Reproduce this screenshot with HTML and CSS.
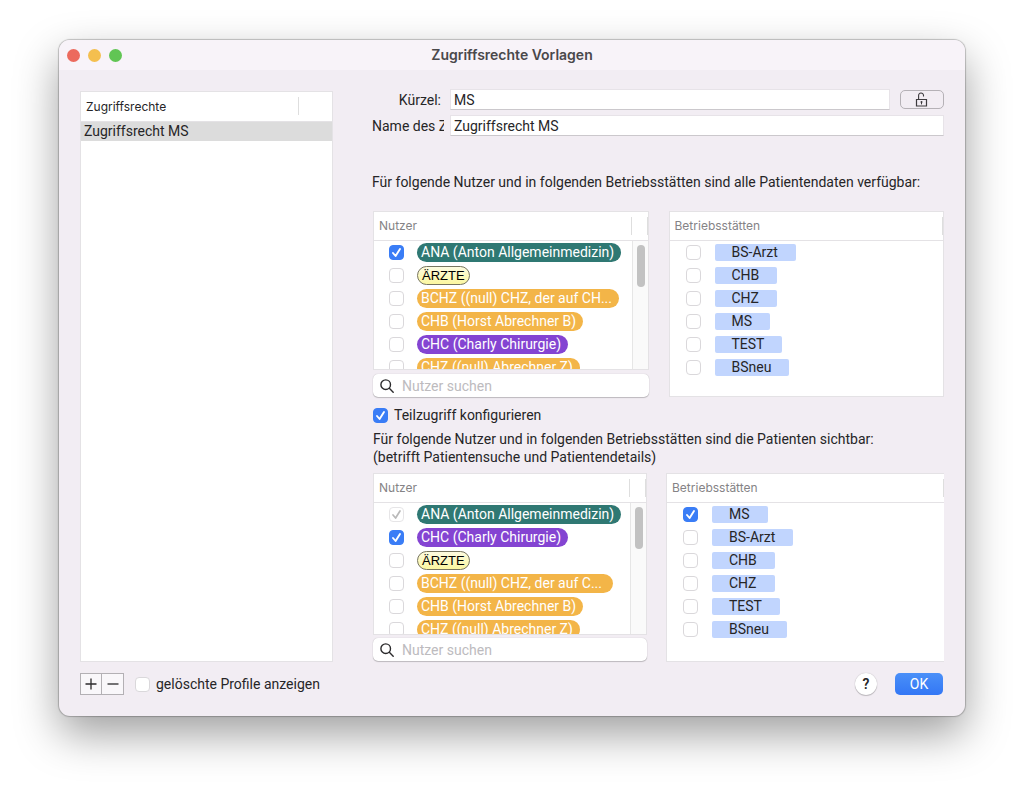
FILE: index.html
```html
<!DOCTYPE html>
<html lang="de">
<head>
<meta charset="utf-8">
<title>Zugriffsrechte Vorlagen</title>
<link rel="stylesheet" href="styles.css">
</head>
<body>
<main class="window">
  <header class="titlebar">
    <div class="lights">
      <button class="light close" aria-label="Schließen"></button>
      <button class="light minimize" aria-label="Minimieren"></button>
      <button class="light maximize" aria-label="Maximieren"></button>
    </div>
    <h1 class="title">Zugriffsrechte Vorlagen</h1>
  </header>

  <div class="content">
    <section class="panel profiles">
      <table class="profile-table">
        <thead><tr><th>Zugriffsrechte</th><th class="end" aria-label="Spalte"></th></tr></thead>
        <tbody><tr><td colspan="2">Zugriffsrecht MS</td></tr></tbody>
      </table>
    </section>

    <section class="details">
      <div class="form">
        <label class="form-label short" for="kuerzel">Kürzel:</label>
        <div class="form-line">
          <input class="field" id="kuerzel" type="text" value="MS">
          <button class="lock" aria-label="Entsperren">
            <svg width="14" height="16" viewBox="0 0 14 16" fill="none" stroke="#3c3a3d">
              <path d="M1.5 7.5h10v6.5h-10z" stroke-width="1.2"/>
              <path d="M3.6 7.2V3.6a2.4 2.4 0 0 1 4.9-.3v1.1" stroke-width="1.1"/>
              <circle cx="6.5" cy="10" r="1" fill="#3c3a3d" stroke="none"/>
              <path d="M6.5 10v2.4"/>
            </svg>
          </button>
        </div>
        <label class="form-label" for="name">Name des Zugriffsrechts:</label>
        <input class="field" id="name" type="text" value="Zugriffsrecht MS">
      </div>

      <p class="intro">Für folgende Nutzer und in folgenden Betriebsstätten sind alle Patientendaten verfügbar:</p>

      <div class="pair">
        <div class="users">
          <div class="panel scroller">
            <table class="list">
              <colgroup><col class="col-tick"><col><col class="col-end"></colgroup>
              <thead><tr><th colspan="2">Nutzer</th><th class="end both" aria-label="Spalte"></th></tr></thead>
              <tbody>
                <tr><td class="tick"><input type="checkbox" id="a1" checked></td><td colspan="2"><label class="pill teal" for="a1">ANA (Anton Allgemeinmedizin)</label></td></tr>
                <tr><td class="tick"><input type="checkbox" id="a2"></td><td colspan="2"><label class="pill yellow" for="a2">ÄRZTE</label></td></tr>
                <tr><td class="tick"><input type="checkbox" id="a3"></td><td colspan="2"><label class="pill orange" for="a3">BCHZ ((null) CHZ, der auf CH...</label></td></tr>
                <tr><td class="tick"><input type="checkbox" id="a4"></td><td colspan="2"><label class="pill orange" for="a4">CHB (Horst Abrechner B)</label></td></tr>
                <tr><td class="tick"><input type="checkbox" id="a5"></td><td colspan="2"><label class="pill purple" for="a5">CHC (Charly Chirurgie)</label></td></tr>
                <tr><td class="tick"><input type="checkbox" id="a6"></td><td colspan="2"><label class="pill orange" for="a6">CHZ ((null) Abrechner Z)</label></td></tr>
              </tbody>
            </table>
            <div class="track"><div class="thumb"></div></div>
          </div>
          <div class="search">
            <svg width="14" height="14" viewBox="0 0 14 14" fill="none" stroke="#2b2a2c" stroke-width="1.4" stroke-linecap="round"><circle cx="5.7" cy="5.7" r="4.8"/><path d="M9.3 9.3l3.9 3.9"/></svg>
            <input type="text" placeholder="Nutzer suchen" aria-label="Nutzer suchen">
          </div>
        </div>
        <div class="panel sites">
          <table class="list">
            <colgroup><col class="col-tick"><col><col class="col-end"></colgroup>
            <thead><tr><th colspan="2">Betriebsstätten</th><th class="end last" aria-label="Spalte"></th></tr></thead>
            <tbody>
              <tr><td class="tick"><input type="checkbox" id="b1"></td><td colspan="2"><label class="tag" for="b1">BS-Arzt</label></td></tr>
              <tr><td class="tick"><input type="checkbox" id="b2"></td><td colspan="2"><label class="tag" for="b2">CHB</label></td></tr>
              <tr><td class="tick"><input type="checkbox" id="b3"></td><td colspan="2"><label class="tag" for="b3">CHZ</label></td></tr>
              <tr><td class="tick"><input type="checkbox" id="b4"></td><td colspan="2"><label class="tag" for="b4">MS</label></td></tr>
              <tr><td class="tick"><input type="checkbox" id="b5"></td><td colspan="2"><label class="tag" for="b5">TEST</label></td></tr>
              <tr><td class="tick"><input type="checkbox" id="b6"></td><td colspan="2"><label class="tag" for="b6">BSneu</label></td></tr>
            </tbody>
          </table>
        </div>
      </div>

      <div class="option">
        <input type="checkbox" id="partial" checked>
        <label for="partial">Teilzugriff konfigurieren</label>
      </div>
      <p class="note">Für folgende Nutzer und in folgenden Betriebsstätten sind die Patienten sichtbar:<br>(betrifft Patientensuche und Patientendetails)</p>

      <div class="pair second">
        <div class="users">
          <div class="panel scroller">
            <table class="list">
              <colgroup><col class="col-tick"><col><col class="col-end"></colgroup>
              <thead><tr><th colspan="2">Nutzer</th><th class="end both" aria-label="Spalte"></th></tr></thead>
              <tbody>
                <tr><td class="tick"><input type="checkbox" id="c1" checked disabled></td><td colspan="2"><label class="pill teal" for="c1">ANA (Anton Allgemeinmedizin)</label></td></tr>
                <tr><td class="tick"><input type="checkbox" id="c2" checked></td><td colspan="2"><label class="pill purple" for="c2">CHC (Charly Chirurgie)</label></td></tr>
                <tr><td class="tick"><input type="checkbox" id="c3"></td><td colspan="2"><label class="pill yellow" for="c3">ÄRZTE</label></td></tr>
                <tr><td class="tick"><input type="checkbox" id="c4"></td><td colspan="2"><label class="pill orange cut" for="c4">BCHZ ((null) CHZ, der auf C...</label></td></tr>
                <tr><td class="tick"><input type="checkbox" id="c5"></td><td colspan="2"><label class="pill orange" for="c5">CHB (Horst Abrechner B)</label></td></tr>
                <tr><td class="tick"><input type="checkbox" id="c6"></td><td colspan="2"><label class="pill orange" for="c6">CHZ ((null) Abrechner Z)</label></td></tr>
              </tbody>
            </table>
            <div class="track"><div class="thumb"></div></div>
          </div>
          <div class="search">
            <svg width="14" height="14" viewBox="0 0 14 14" fill="none" stroke="#2b2a2c" stroke-width="1.4" stroke-linecap="round"><circle cx="5.7" cy="5.7" r="4.8"/><path d="M9.3 9.3l3.9 3.9"/></svg>
            <input type="text" placeholder="Nutzer suchen" aria-label="Nutzer suchen">
          </div>
        </div>
        <div class="panel sites open">
          <table class="list">
            <colgroup><col class="col-tick"><col><col class="col-end"></colgroup>
            <thead><tr><th colspan="2">Betriebsstätten</th><th class="end last" aria-label="Spalte"></th></tr></thead>
            <tbody>
              <tr><td class="tick"><input type="checkbox" id="d1" checked></td><td colspan="2"><label class="tag" for="d1">MS</label></td></tr>
              <tr><td class="tick"><input type="checkbox" id="d2"></td><td colspan="2"><label class="tag" for="d2">BS-Arzt</label></td></tr>
              <tr><td class="tick"><input type="checkbox" id="d3"></td><td colspan="2"><label class="tag" for="d3">CHB</label></td></tr>
              <tr><td class="tick"><input type="checkbox" id="d4"></td><td colspan="2"><label class="tag" for="d4">CHZ</label></td></tr>
              <tr><td class="tick"><input type="checkbox" id="d5"></td><td colspan="2"><label class="tag" for="d5">TEST</label></td></tr>
              <tr><td class="tick"><input type="checkbox" id="d6"></td><td colspan="2"><label class="tag" for="d6">BSneu</label></td></tr>
            </tbody>
          </table>
        </div>
      </div>
    </section>
  </div>

  <footer class="footer">
    <div class="segmented">
      <button aria-label="Hinzufügen"><svg width="12" height="12" viewBox="0 0 12 12" stroke="#2b2a2c" stroke-width="1.3"><path d="M.5 6h11M6 .5v11"/></svg></button>
      <button aria-label="Entfernen"><svg width="12" height="12" viewBox="0 0 12 12" stroke="#2b2a2c" stroke-width="1.3"><path d="M.5 6h11"/></svg></button>
    </div>
    <div class="option deleted">
      <input type="checkbox" id="deleted">
      <label for="deleted">gelöschte Profile anzeigen</label>
    </div>
    <button class="help" aria-label="Hilfe">?</button>
    <button class="ok">OK</button>
  </footer>
</main>
</body>
</html>
```
FILE: styles.css
```css
* { box-sizing: border-box; }

body {
  margin: 0;
  min-height: 100vh;
  padding: 40px 59px 78px;
  display: flex;
  background: #fff;
  color: #262527;
  font: 14px/18px Roboto, "Liberation Sans", sans-serif;
}

button, input { font: inherit; color: inherit; margin: 0; padding: 0; }
p, h1 { margin: 0; }
svg { display: block; }

.window {
  flex: 1;
  min-width: 0;
  display: flex;
  flex-direction: column;
  border-radius: 11px;
  background: #f2edf3;
  box-shadow: 0 0 1px 1px rgba(0, 0, 0, .22), 0 18px 44px rgba(0, 0, 0, .38);
}

.titlebar {
  display: grid;
  grid-template-columns: 1fr auto 1fr;
  align-items: center;
  height: 30px;
  padding: 0 8px;
  border-radius: 11px 11px 0 0;
  background: #f8f3f9;
}
.title { font: 600 14px/18px Inter, "Liberation Sans", sans-serif; color: #4a484b; }
.lights { display: flex; gap: 8px; }
.light { width: 13px; height: 13px; border: 0; border-radius: 50%; }
.close { background: #ec6a5e; }
.minimize { background: #f4bf4f; }
.maximize { background: #61c554; }

.content {
  flex: 1;
  display: grid;
  grid-template-columns: 253px minmax(0, 1fr);
  gap: 39px;
  padding: 19px 21px 0 21px;
}

.panel { background: #fff; border: 1px solid #e4e2e5; overflow: hidden; }
.profiles { margin-top: 2px; }
.open { border-right: 0; }

table { width: 100%; border-collapse: collapse; table-layout: fixed; }
th, td { padding: 0; text-align: left; font-weight: 400; }
th {
  height: 28px;
  padding-top: 1px;
  border-bottom: 1px solid #e4e2e5;
  font-family: Inter, "Liberation Sans", sans-serif;
  font-size: 12px;
}
.end {
  width: 34px;
  background: linear-gradient(#dedede, #dedede) left center / 1px 18px no-repeat;
}
.profile-table th { height: 29px; padding-left: 5px; }
.profile-table td { height: 20px; padding-left: 3px; background: #dcdcdc; }

.form {
  display: grid;
  grid-template-columns: 72px minmax(0, 1fr);
  gap: 5px 6px;
  align-items: center;
}
.form-label { overflow: hidden; white-space: nowrap; }
.short { text-align: right; padding-right: 3px; }
.form-line { display: flex; gap: 10px; align-items: center; }
.field {
  flex: 1;
  min-width: 0;
  height: 21px;
  padding: 0 3px;
  border: 1px solid #e7e3e8;
  border-bottom-color: #cbc8cc;
  background: #fff;
}
.lock {
  display: grid;
  place-items: center;
  width: 44px;
  height: 19px;
  border: 1px solid #b5b1b6;
  border-radius: 5px;
  background: #f2edf3;
}

.intro { margin: 37px 0 20px; white-space: nowrap; }

.pair {
  display: grid;
  grid-template-columns: minmax(0, 1fr) minmax(0, 1fr);
  gap: 20px;
  margin-left: 1px;
}
.second { grid-template-columns: minmax(0, 274fr) minmax(0, 278fr); gap: 19px; }
.users { display: flex; flex-direction: column; gap: 4px; }
.scroller { position: relative; height: 159px; }
.second .users { gap: 3px; padding-bottom: 1px; }
.second .scroller { height: 162px; }

.list th { padding-left: 5px; color: #858386; }
.list .end { width: 17px; padding: 0; }
.list .both {
  background:
    linear-gradient(#dedede, #dedede) left center / 1px 18px no-repeat,
    linear-gradient(#dedede, #dedede) right center / 1px 18px no-repeat;
}
.list .last { background-position: right center; }
.list td { height: 23px; padding-top: 2px; vertical-align: middle; white-space: nowrap; }
.list .tick { padding-left: 15px; }
.col-tick { width: 43px; }
.sites .col-tick { width: 45px; }
.sites .tick { padding-left: 16px; }
.col-end { width: 17px; }

.track {
  position: absolute;
  top: 29px;
  right: 0;
  bottom: 0;
  width: 16px;
  padding: 4px 3px 0 4px;
  border-left: 1px solid #e6e6e6;
  background: #fafafa;
}
.thumb { width: 8px; height: 42px; border-radius: 4px; background: #c2c2c2; }

.pill {
  display: block;
  width: max-content;
  height: 19px;
  padding: 0 7px 0 4px;
  border-radius: 10px;
  color: #fff;
  line-height: 19px;
}
.teal { background: #2f7873; }
.orange { background: #f3b548; }
.purple { background: #8444d2; }
.yellow {
  padding-right: 4px;
  border: 1px solid #77755f;
  background: linear-gradient(#fdfbe0, #fbf7a0);
  color: #000;
  font: 13px/17px "Liberation Sans", sans-serif;
}
.cut { padding-right: 11px; }
.tag {
  display: block;
  width: max-content;
  height: 17px;
  padding: 0 18px 0 17px;
  border-radius: 2px;
  background: #c1d5fe;
  line-height: 17px;
}

input[type="checkbox"] {
  appearance: none;
  display: block;
  flex: none;
  width: 15px;
  height: 15px;
  border: 1px solid #dad8db;
  border-radius: 4px;
  background: #fff;
}
input[type="checkbox"]:checked {
  border-color: #3a7df6;
  background: url("data:image/svg+xml,%3Csvg xmlns='http://www.w3.org/2000/svg' viewBox='0 0 13 13'%3E%3Cpath d='M3 7l2.6 3L10 3' fill='none' stroke='white' stroke-width='1.9' stroke-linecap='round' stroke-linejoin='round'/%3E%3C/svg%3E") center / 13px 13px no-repeat #3a7df6;
}
input[type="checkbox"]:checked:disabled {
  border-color: #e6e5e7;
  background: url("data:image/svg+xml,%3Csvg xmlns='http://www.w3.org/2000/svg' viewBox='0 0 13 13'%3E%3Cpath d='M3 7l2.6 3L10 3' fill='none' stroke='%23b9b9b9' stroke-width='1.7' stroke-linecap='round' stroke-linejoin='round'/%3E%3C/svg%3E") center / 13px 13px no-repeat #fff;
}

.search {
  display: flex;
  align-items: center;
  gap: 8px;
  height: 23px;
  padding: 0 7px;
  border-radius: 5px;
  background: #fff;
  box-shadow: 0 0 1px rgba(0, 0, 0, .25), 0 1px 1px rgba(0, 0, 0, .2);
}
.search input { flex: 1; min-width: 0; border: 0; outline: 0; background: none; }
.search input::placeholder { color: #bdbbbe; opacity: 1; }

.option { display: flex; align-items: center; gap: 6px; }
.details .option { margin-top: 9px; padding-left: 1px; }
.note { margin: 6px 0 7px; padding-left: 1px; white-space: nowrap; }

.footer { display: flex; align-items: center; padding: 11px 22px 21px 21px; }
.segmented { display: flex; }
.segmented button {
  display: grid;
  place-items: center;
  width: 22px;
  height: 22px;
  border: 1px solid #b3b0b4;
  background: #f9f7fa;
}
.segmented button + button { border-left: 0; }
.deleted { margin-left: 11px; }
.help {
  width: 22px;
  height: 22px;
  margin-left: auto;
  border: 0;
  border-radius: 50%;
  background: #fff;
  box-shadow: 0 0 1px rgba(0, 0, 0, .3), 0 1px 1px rgba(0, 0, 0, .2);
  font-weight: 600;
}
.ok {
  width: 48px;
  height: 22px;
  margin-left: 18px;
  border: 0;
  border-radius: 5px;
  background: linear-gradient(#4a90f8, #3377f5);
  color: #fff;
}
```
